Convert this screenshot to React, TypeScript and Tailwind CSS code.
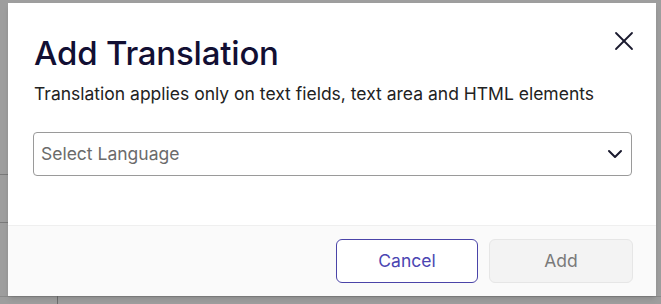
import { X, ChevronDown } from "lucide-react";

const App = () => {
  return (
    <div
      className="relative w-[661px] h-[304px] overflow-hidden bg-[#9e9e9e] pl-[8px] pt-[3px]"
      style={{ fontFamily: "Inter, 'Noto Sans', sans-serif" }}
    >
      {/* page lines behind the backdrop */}
      <div className="absolute left-0 top-[174px] w-[8px] h-px bg-[#7a7a7a]" />
      <div className="absolute left-0 top-[222px] w-[8px] h-px bg-[#7a7a7a]" />
      <div className="absolute left-0 top-[296px] w-[661px] h-px bg-[#8a8a8a]" />
      <div className="absolute left-[57px] top-[296px] w-px h-[8px] bg-[#6e6e6e]" />

      <div className="relative flex h-[293px] w-[648px] flex-col bg-white shadow-md">
        <div className="flex-1 pl-[26px] pr-[24px] pt-[31px]">
          <div className="flex items-start justify-between">
            <h2 className="text-[33px] leading-[38px] font-medium text-[#120f33] tracking-[-0.2px]">
              Add Translation
            </h2>
            <button className="mt-[-9px] mr-[-8px] text-[#1a1a2e]" aria-label="Close">
              <X className="w-[32px] h-[32px]" strokeWidth={1.35} />
            </button>
          </div>
          <p className="mt-[10px] text-[17.5px] leading-6 text-[#222]">
            Translation applies only on text fields, text area and HTML elements
          </p>
          <div className="mt-[26px] ml-[-1px] flex h-[44px] items-center justify-between rounded-[4px] border border-[#9a9a9a] pl-[7px] pr-[4px]">
            <span className="text-[17.5px] text-[#6b6b6b]">Select Language</span>
            <ChevronDown className="w-[24px] h-[24px] text-[#1a1a2e]" strokeWidth={2} />
          </div>
        </div>

        <div className="flex h-[71px] items-start justify-end gap-[11px] border-t border-[#efefef] bg-[#fafafa] pr-[23px] pt-[13px]">
          <button className="h-[44px] w-[142px] rounded-[6px] border border-[#4a44a8] bg-white text-[17.5px] text-[#4b45b2]">
            Cancel
          </button>
          <button className="h-[44px] w-[144px] rounded-[6px] border border-[#e6e6e6] bg-[#f3f3f3] text-[17.5px] text-[#7a7a7a]">
            Add
          </button>
        </div>
      </div>
    </div>
  );
};

export default App;
